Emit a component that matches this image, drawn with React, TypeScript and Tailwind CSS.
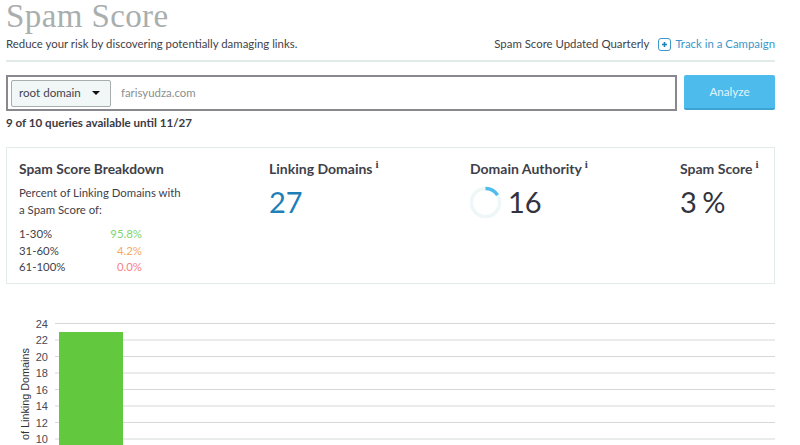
const RANGES = [
  { label: '1-30%', value: '95.8%', color: 'text-[#7ed56f]' },
  { label: '31-60%', value: '4.2%', color: 'text-[#f6a868]' },
  { label: '61-100%', value: '0.0%', color: 'text-[#f77f86]' },
]

const TICKS = [24, 22, 20, 18, 16, 14, 12, 10]

function Info() {
  return <span className="ml-[3px] text-[11px] font-bold relative top-[-6px] font-['Liberation_Serif',serif]">i</span>
}

function Chart() {
  return (
    <svg width="800" height="127" viewBox="0 0 800 127" className="block">
      {TICKS.map((t, i) => {
        const y = 5.5 + i * 16.5
        return (
          <g key={t}>
            <line x1="55" x2="775" y1={y} y2={y} stroke="#d5d9d9" strokeWidth="1" />
            <text x="48" y={y + 4} textAnchor="end" fontSize="11" fill="#4a4a55" fontFamily="'Liberation Sans', sans-serif">{t}</text>
          </g>
        )
      })}
      <rect x="59" y="14" width="64" height="113" fill="#62c93e" />
      <text
        transform="translate(29 122) rotate(-90)"
        fontSize="10.8"
        fill="#333"
        fontFamily="'Liberation Sans', sans-serif"
      >
        of Linking Domains
      </text>
    </svg>
  )
}

export default function App() {
  return (
    <div className="w-[800px] h-[445px] overflow-hidden bg-white font-['Lato',sans-serif] text-[#3f3f4a]">
      <div className="pl-[6px] pr-[25px]">
        <h1 className="h-[36px] text-[33px] leading-[32px] font-normal font-['Liberation_Serif',serif] text-[#a9aeae] tracking-[0.4px]">Spam Score</h1>

        <div className="flex justify-between items-center h-[16px] text-[11.4px]">
          <span>Reduce your risk by discovering potentially damaging links.</span>
          <span className="flex items-center">
            <span>Spam Score Updated Quarterly</span>
            <span className="ml-[9px] mr-[4px] w-[13px] h-[13px] border border-[#3b97c9] rounded-[3px] flex items-center justify-center">
              <svg width="7" height="7" viewBox="0 0 7 7">
                <path d="M3.5 1v5M1 3.5h5" stroke="#1f7fb8" strokeWidth="1.6" fill="none" />
              </svg>
            </span>
            <span className="text-[#3b97c9]">Track in a Campaign</span>
          </span>
        </div>

        <div className="mt-[8px] border-t-2 border-[#e3eaea]" />

        <div className="flex mt-[13px] gap-[7px]">
          <div className="w-[671px] h-[36px] border-2 border-[#88888e] flex items-center pl-[3px]">
            <div className="w-[100px] h-[27px] bg-[#f0f7f6] border border-[#a8adad] rounded-[2px] flex items-center pl-[7px] text-[11.6px] text-[#45454f]">
              root domain
              <span className="ml-[11px] w-0 h-0 border-x-[4px] border-x-transparent border-t-[4px] border-t-[#111]" />
            </div>
            <span className="ml-[10px] text-[11.4px] text-[#8a8f8f]">farisyudza.com</span>
          </div>
          <button className="w-[91px] h-[35px] bg-[#4dbbec] border-b-2 border-[#3da3d3] rounded-[2px] text-[11.6px] text-[#e3f5fc]">Analyze</button>
        </div>

        <div className="mt-[4px] text-[11.6px] font-bold leading-[15px] text-[#3a3a44]">9 of 10 queries available until 11/27</div>

        <div className="mt-[17px] h-[137px] border border-[#e3eaea] flex pt-[12px] pl-[12px]">
          <div className="w-[250px]">
            <div className="text-[13.8px] font-bold leading-[18px]">Spam Score Breakdown</div>
            <div className="mt-[6px] text-[11.4px] leading-[17px]">Percent of Linking Domains with<br />a Spam Score of:</div>
            <div className="mt-[8px] text-[11.4px] leading-[16.5px] w-[123px]">
              {RANGES.map(r => (
                <div key={r.label} className="flex justify-between">
                  <span>{r.label}</span>
                  <span className={r.color}>{r.value}</span>
                </div>
              ))}
            </div>
          </div>

          <div className="w-[201px]">
            <div className="text-[14px] font-bold leading-[18px]">Linking Domains<Info /></div>
            <div className="mt-[3px] text-[29px] leading-[40px] text-[#1f7fb8]">27</div>
          </div>

          <div className="w-[210px]">
            <div className="text-[14px] font-bold leading-[18px]">Domain Authority<Info /></div>
            <div className="mt-[3px] flex items-center gap-[6px]">
              <svg width="33" height="33" viewBox="0 0 34 34" className="shrink-0 ml-[-1px]">
                <circle cx="17" cy="17" r="14.5" fill="none" stroke="#eef6f7" strokeWidth="3.5" />
                <path d="M17 2.5 A14.5 14.5 0 0 1 29.4 9.5" fill="none" stroke="#4dbbec" strokeWidth="3.5" />
              </svg>
              <span className="text-[29px] leading-[40px] text-[#333340]">16</span>
            </div>
          </div>

          <div>
            <div className="text-[14px] font-bold leading-[18px]">Spam Score<Info /></div>
            <div className="mt-[3px] text-[29px] leading-[40px] text-[#333340] [word-spacing:-2px]">3 %</div>
          </div>
        </div>
      </div>

      <div className="mt-[34px]">
        <Chart />
      </div>
    </div>
  )
}
